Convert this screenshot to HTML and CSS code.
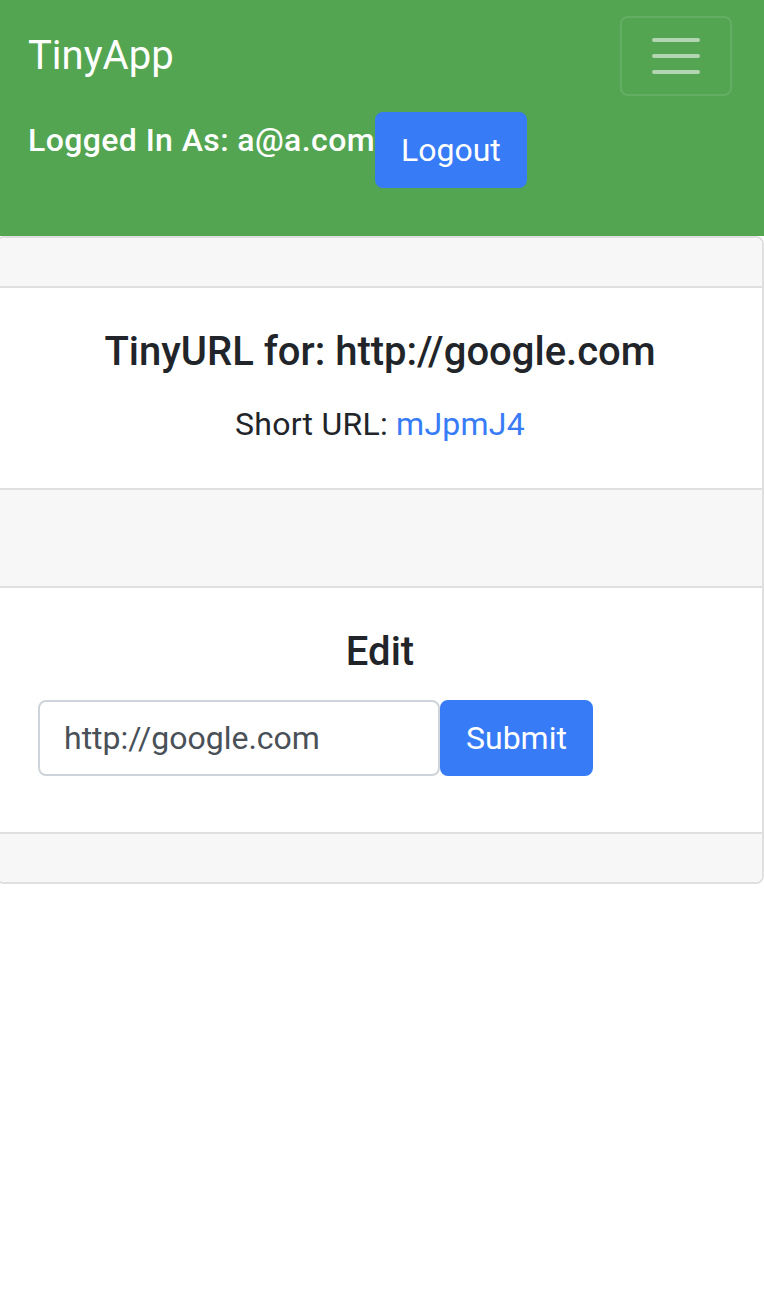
FILE: index.html
```html
<!DOCTYPE html>
<html lang="en">
<head>
<meta charset="utf-8">
<title>TinyApp</title>
<link rel="stylesheet" href="styles.css">
</head>
<body>
<nav class="navbar">
  <div class="nav-top">
    <a class="brand" href="#">TinyApp</a>
    <button class="toggler" type="button" aria-label="Toggle navigation">
      <svg width="60" height="60" viewBox="0 0 30 30"><path stroke="rgba(255,255,255,0.55)" stroke-linecap="round" stroke-width="2" d="M4 7h22M4 15h22M4 23h22"/></svg>
    </button>
  </div>
  <div class="nav-user">
    <span class="user-label">Logged In As: a@a.com</span>
    <button class="btn btn-primary" type="button">Logout</button>
  </div>
</nav>
<main class="card">
  <div class="card-header"></div>
  <section class="card-body">
    <h3 class="card-title">TinyURL for: http://google.com</h3>
    <p class="card-text">Short URL: <a href="#">mJpmJ4</a></p>
  </section>
  <div class="card-footer"></div>
  <div class="card-header"></div>
  <section class="card-body edit-body">
    <h3 class="card-title">Edit</h3>
    <form class="edit-form">
      <input class="form-control" type="text" value="http://google.com">
      <button class="btn btn-primary" type="submit">Submit</button>
    </form>
  </section>
  <div class="card-footer"></div>
</main>
</body>
</html>
```
FILE: styles.css
```css
* { box-sizing: border-box; }
html, body { margin: 0; padding: 0; }
body {
  font-family: Roboto, "Liberation Sans", sans-serif;
  color: #212529;
  background: #fff;
  font-size: 32px;
  line-height: 1.5;
}
.navbar {
  background: #53a552;
  padding: 16px 32px 48px 28px;
}
.nav-top {
  display: flex;
  justify-content: space-between;
  align-items: center;
}
.brand {
  color: #fff;
  text-decoration: none;
  font-size: 40px;
  line-height: 60px;
  padding: 10px 0;
}
.toggler {
  width: 112px;
  height: 80px;
  padding: 8px 24px;
  border: 2px solid rgba(255,255,255,0.1);
  border-radius: 8px;
  background: transparent;
  display: flex;
  align-items: center;
  justify-content: center;
}
.toggler svg { display: block; }
.nav-user {
  display: flex;
  align-items: flex-start;
  margin-top: 16px;
}
.user-label {
  color: #fff;
  font-weight: 500;
  font-size: 32px;
  line-height: 38px;
  padding-top: 9px;
  letter-spacing: 0.4px;
}
.btn {
  font-family: inherit;
  font-size: 32px;
  line-height: 48px;
  padding: 12px 24px;
  border: 2px solid transparent;
  border-radius: 8px;
  cursor: pointer;
}
.btn-primary {
  background: #377bf6;
  border-color: #377bf6;
  color: #fff;
}
.card {
  display: block;
  margin: 0 0 0 -4px;
  width: 768px;
  border: 2px solid #dfdfdf;
  border-radius: 8px;
  overflow: hidden;
}
.card-header {
  height: 50px;
  background: #f7f7f7;
  border-bottom: 2px solid #dfdfdf;
}
.card-footer {
  height: 50px;
  background: #f7f7f7;
  border-top: 2px solid #dfdfdf;
}
.card-body {
  padding: 40px;
  text-align: center;
}
.card-title {
  margin: 0 0 24px;
  font-size: 40px;
  font-weight: 500;
  line-height: 48px;
}
.card-text { margin: 0; letter-spacing: 0.25px; }
.card-text a { color: #377bf6; text-decoration: none; }
.edit-body { padding-bottom: 56px; }
.edit-form {
  display: flex;
  margin: 0;
}
.form-control {
  width: 402px;
  height: 76px;
  font-family: inherit;
  font-size: 32px;
  line-height: 48px;
  padding: 12px 24px;
  color: #495057;
  border: 2px solid #ced4da;
  border-radius: 8px;
  background: #fff;
}
```
